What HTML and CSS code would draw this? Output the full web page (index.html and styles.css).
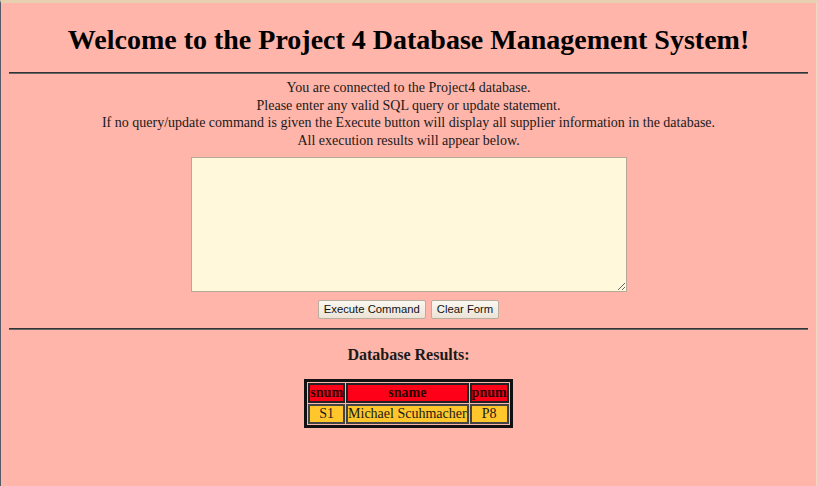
FILE: index.html
```html
<!DOCTYPE html>
<html>
<head>
<meta charset="utf-8">
<title>Project 4</title>
<link rel="stylesheet" href="styles.css">
</head>
<body>
<div class="frame">
  <h1 class="title">Welcome to the Project 4 Database Management System!</h1>
  <hr class="rule">
  <div class="intro">
    You are connected to the Project4 database.<br>
    Please enter any valid SQL query or update statement.<br>
    If no query/update command is given the Execute button will display all supplier information in the database.<br>
    All execution results will appear below.
  </div>
  <form class="form">
    <textarea class="query"></textarea>
    <div class="buttons">
      <button type="button" class="btn">Execute Command</button>
      <button type="reset" class="btn">Clear Form</button>
    </div>
  </form>
  <hr class="rule rule-lower">
  <h3 class="results-title">Database Results:</h3>
  <table class="results">
    <tr><th>snum</th><th>sname</th><th>pnum</th></tr>
    <tr><td>S1</td><td>Michael Scuhmacher</td><td>P8</td></tr>
  </table>
</div>
</body>
</html>
```
FILE: styles.css
```css
html, body {
  margin: 0;
  padding: 0;
  height: 100%;
}
body {
  background: #ffb5aa;
  font-family: "Liberation Serif", "Times New Roman", serif;
  color: #1a1a1a;
}
.frame {
  box-sizing: border-box;
  min-height: 100%;
  border-top: 3px solid #e8cfb0;
  border-left: 1px solid #555a66;
  border-right: 1px solid #f0d8c0;
  padding: 0 8px;
  text-align: center;
  overflow: hidden;
}
.title {
  font-size: 28px;
  line-height: 32px;
  font-weight: bold;
  margin: 21px 0 16px;
  color: #000;
}
.rule {
  margin: 0;
  border: none;
  border-top: 1px solid #333;
  border-bottom: 1px solid #666;
}
.intro {
  font-size: 14px;
  line-height: 17.7px;
  margin-top: 5px;
}
.form {
  margin: 7px 0 0;
}
.query {
  display: block;
  margin: 0 auto;
  width: 436px;
  height: 135px;
  box-sizing: border-box;
  background: #fff8da;
  border: 1px solid #b8a898;
  resize: both;
}
.buttons {
  margin-top: 8px;
  display: flex;
  justify-content: center;
  gap: 5px;
}
.btn {
  font-family: "Liberation Sans", Arial, sans-serif;
  font-size: 11.3px;
  color: #111;
  background: linear-gradient(#fbf8f1, #ece3d6);
  border: 1px solid #b9ada0;
  border-radius: 2px;
  padding: 0 5px;
  height: 19px;
}
.rule-lower {
  margin-top: 9px;
}
.results-title {
  font-size: 16px;
  line-height: 18px;
  font-weight: bold;
  margin: 16px 0 15px;
}
.results {
  margin: 0 auto;
  border: 3px solid #111;
  border-spacing: 1px;
  font-size: 14px;
  line-height: 16px;
}
.results th {
  background: #ff0019;
  color: #2a0000;
  border: 2px solid #222;
  padding: 0;
}
.results td {
  background: #ffc72c;
  border: 2px solid #444;
  padding: 0;
}
```
